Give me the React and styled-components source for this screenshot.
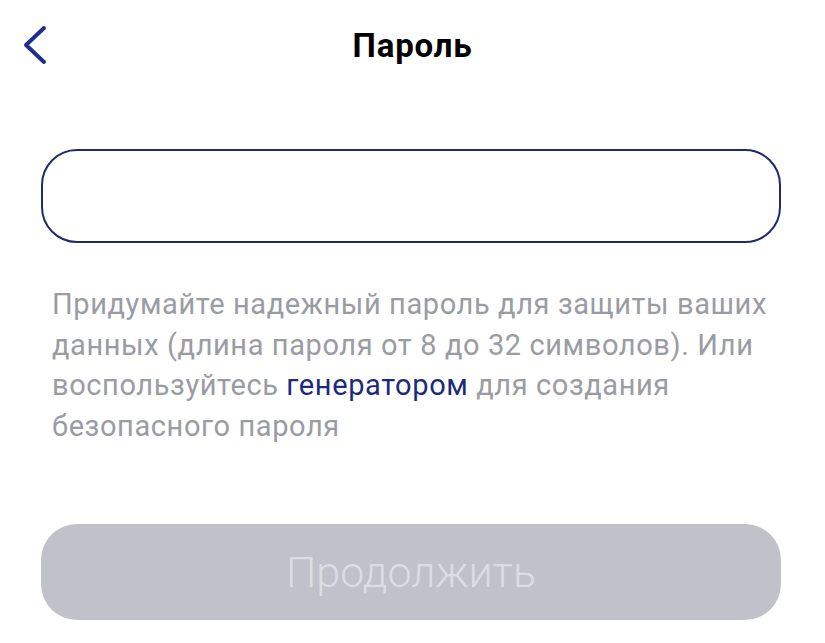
import React from 'react';
import styled, { createGlobalStyle } from 'styled-components';

const GlobalStyle = createGlobalStyle`
  html, body {
    margin: 0;
    padding: 0;
    background: #ffffff;
  }
  body {
    font-family: Roboto, "Liberation Sans", sans-serif;
  }
`;

const Screen = styled.div`
  width: 825px;
  height: 643px;
  display: flex;
  flex-direction: column;
  background: #ffffff;
  overflow: hidden;
`;

const TopBar = styled.header`
  height: 92px;
  display: grid;
  grid-template-columns: 80px 1fr 80px;
  align-items: center;
`;

const BackButton = styled.button`
  background: none;
  border: none;
  padding: 0 0 0 20px;
  height: 40px;
  display: flex;
  align-items: center;
  cursor: pointer;
  margin-top: -2px;
`;

const Title = styled.h1`
  margin: -2px 0 0 0;
  text-align: center;
  font-size: 33px;
  font-weight: 700;
  letter-spacing: 0.8px;
  color: #000000;
`;

const Body = styled.main`
  display: flex;
  flex-direction: column;
  padding: 57px 44px 0 41px;
`;

const Field = styled.input`
  box-sizing: border-box;
  width: 740px;
  height: 94px;
  border: 2px solid #1f2a6b;
  border-radius: 36px;
  outline: none;
  padding: 0 30px;
  font-family: inherit;
  font-size: 30px;
  background: #ffffff;
`;

const Hint = styled.p`
  margin: 41px 0 0 11px;
  width: 740px;
  font-size: 29px;
  line-height: 40.5px;
  color: #9a9ca4;
  letter-spacing: 0.6px;
`;

const Link = styled.a`
  color: #1c2a7e;
  text-decoration: none;
`;

const Submit = styled.button`
  box-sizing: border-box;
  margin-top: 78px;
  width: 740px;
  height: 96px;
  border: none;
  border-radius: 36px;
  background: #c0c1c9;
  color: #dcdde3;
  font-family: inherit;
  font-size: 43px;
  font-weight: 300;
`;

const ChevronLeft = () => (
  <svg width="28" height="40" viewBox="0 0 28 40" fill="none">
    <path
      d="M24 3 L6 20 L24 37"
      stroke="#1f2f8f"
      strokeWidth="4"
      strokeLinecap="round"
      strokeLinejoin="round"
    />
  </svg>
);

export default function App() {
  return (
    <>
      <GlobalStyle />
      <Screen>
        <TopBar>
          <BackButton aria-label="Назад">
            <ChevronLeft />
          </BackButton>
          <Title>Пароль</Title>
          <div />
        </TopBar>
        <Body>
          <Field type="password" />
          <Hint>
            Придумайте надежный пароль для защиты ваших данных (длина пароля от 8 до 32 символов).
            Или воспользуйтесь <Link href="#">генератором</Link> для создания безопасного пароля
          </Hint>
          <Submit disabled>Продолжить</Submit>
        </Body>
      </Screen>
    </>
  );
}
